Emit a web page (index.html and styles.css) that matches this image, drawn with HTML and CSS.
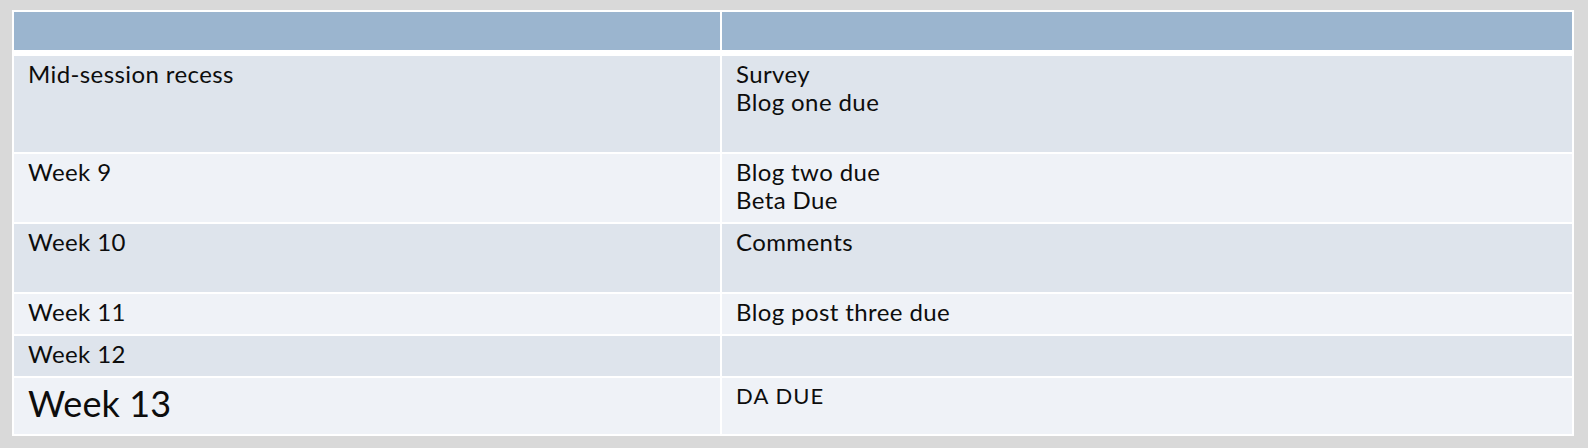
FILE: index.html
```html
<!DOCTYPE html>
<html lang="en">
<head>
<meta charset="utf-8">
<title>Schedule</title>
<link rel="stylesheet" href="styles.css">
</head>
<body>
<div class="frame">
  <div class="grid">
    <div class="cell head"></div>
    <div class="cell head"></div>

    <div class="cell dark">Mid-session recess</div>
    <div class="cell dark">Survey<br>Blog one due</div>

    <div class="cell light">Week 9</div>
    <div class="cell light">Blog two due<br>Beta Due</div>

    <div class="cell dark">Week 10</div>
    <div class="cell dark">Comments</div>

    <div class="cell light">Week 11</div>
    <div class="cell light">Blog post three due</div>

    <div class="cell dark">Week 12</div>
    <div class="cell dark"></div>

    <div class="cell light big">Week 13</div>
    <div class="cell light small">DA DUE</div>
  </div>
</div>
</body>
</html>
```

FILE: styles.css
```css
html, body {
  margin: 0;
  padding: 0;
}
body {
  background: #d9d9d9;
  width: 1588px;
  height: 448px;
  overflow: hidden;
  font-family: "Lato", "Noto Sans", sans-serif;
  color: #0d0d0d;
}
.frame {
  margin: 10px 0 0 12px;
  width: 1558px;
  padding: 2px;
  background: #ffffff;
}
.grid {
  display: grid;
  grid-template-columns: 706px 850px;
  grid-template-rows: 42px 96px 68px 68px 40px 40px 56px;
  column-gap: 2px;
  row-gap: 2px;
}
.cell {
  box-sizing: border-box;
  padding: 4px 14px 0 14px;
  font-size: 24px;
  line-height: 27.6px;
  letter-spacing: 0.4px;
}
.head {
  background: #9bb5cf;
  margin-bottom: 4px;
}
.dark {
  background: #dee4ec;
}
.light {
  background: #eff2f7;
}
.big {
  font-size: 36px;
  line-height: 40px;
  letter-spacing: 0.1px;
  padding-top: 5px;
}
.small {
  font-size: 22px;
  line-height: 24px;
  letter-spacing: 1.1px;
  padding-top: 6px;
}
```
